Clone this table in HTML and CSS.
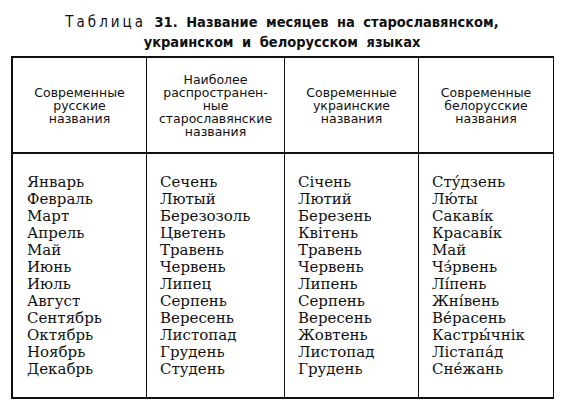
FILE: index.html
```html
<!DOCTYPE html>
<html lang="ru">
<head>
<meta charset="utf-8">
<link rel="stylesheet" href="styles.css">
</head>
<body>
<div class="page">
  <h1 class="title"><span class="label">Таблица</span> 31. Название месяцев на старославянском,<br>украинском и белорусском языках</h1>
  <div class="table">
    <div class="head">Современные<br>русские<br>названия</div>
    <div class="head">Наиболее<br>распространен-<br>ные<br>старославянские<br>названия</div>
    <div class="head">Современные<br>украинские<br>названия</div>
    <div class="head">Современные<br>белорусские<br>названия</div>
    <div class="cell first">Январь<br>Февраль<br>Март<br>Апрель<br>Май<br>Июнь<br>Июль<br>Август<br>Сентябрь<br>Октябрь<br>Ноябрь<br>Декабрь</div>
    <div class="cell">Сечень<br>Лютый<br>Березозоль<br>Цветень<br>Травень<br>Червень<br>Липец<br>Серпень<br>Вересень<br>Листопад<br>Грудень<br>Студень</div>
    <div class="cell">Січень<br>Лютий<br>Березень<br>Квітень<br>Травень<br>Червень<br>Липень<br>Серпень<br>Вересень<br>Жовтень<br>Листопад<br>Грудень</div>
    <div class="cell">Сту́дзень<br>Лю́ты<br>Сакаві́к<br>Красаві́к<br>Май<br>Чэ́рвень<br>Лі́пень<br>Жні́вень<br>Ве́расень<br>Кастры́чнік<br>Лістапа́д<br>Сне́жань</div>
  </div>
</div>
</body>
</html>
```
FILE: styles.css
```css
html, body {
  margin: 0;
  padding: 0;
  background: #fff;
}
.page {
  width: 564px;
  height: 411px;
  color: #111;
}
.title {
  margin: 0;
  padding-top: 12px;
  height: 56px;
  box-sizing: border-box;
  text-align: center;
  font-family: "DejaVu Sans Condensed", "DejaVu Sans", sans-serif;
  font-stretch: condensed;
  font-weight: bold;
  font-size: 14.5px;
  line-height: 20px;
  word-spacing: 4px;
}
.title .label {
  font-weight: normal;
  font-size: 15px;
  letter-spacing: 3px;
}
.table {
  margin-left: 11px;
  width: 543px;
  box-sizing: border-box;
  display: grid;
  grid-template-columns: 134px 138px 134px 135px;
  border-top: 2px solid #111;
  border-bottom: 2px solid #111;
  border-left: 2px solid #111;
}
.head {
  height: 96px;
  box-sizing: border-box;
  border-right: 1.5px solid #111;
  border-bottom: 2px solid #111;
  display: flex;
  align-items: center;
  justify-content: center;
  text-align: center;
  font-family: "DejaVu Sans", sans-serif;
  font-size: 12.5px;
  line-height: 13px;
  padding-top: 1px;
}
.cell {
  border-right: 1.5px solid #111;
  padding: 20px 0 19px 13px;
  font-family: "DejaVu Serif", serif;
  font-size: 15px;
  line-height: 17px;
}
.cell.first {
  padding-left: 14px;
}
```
